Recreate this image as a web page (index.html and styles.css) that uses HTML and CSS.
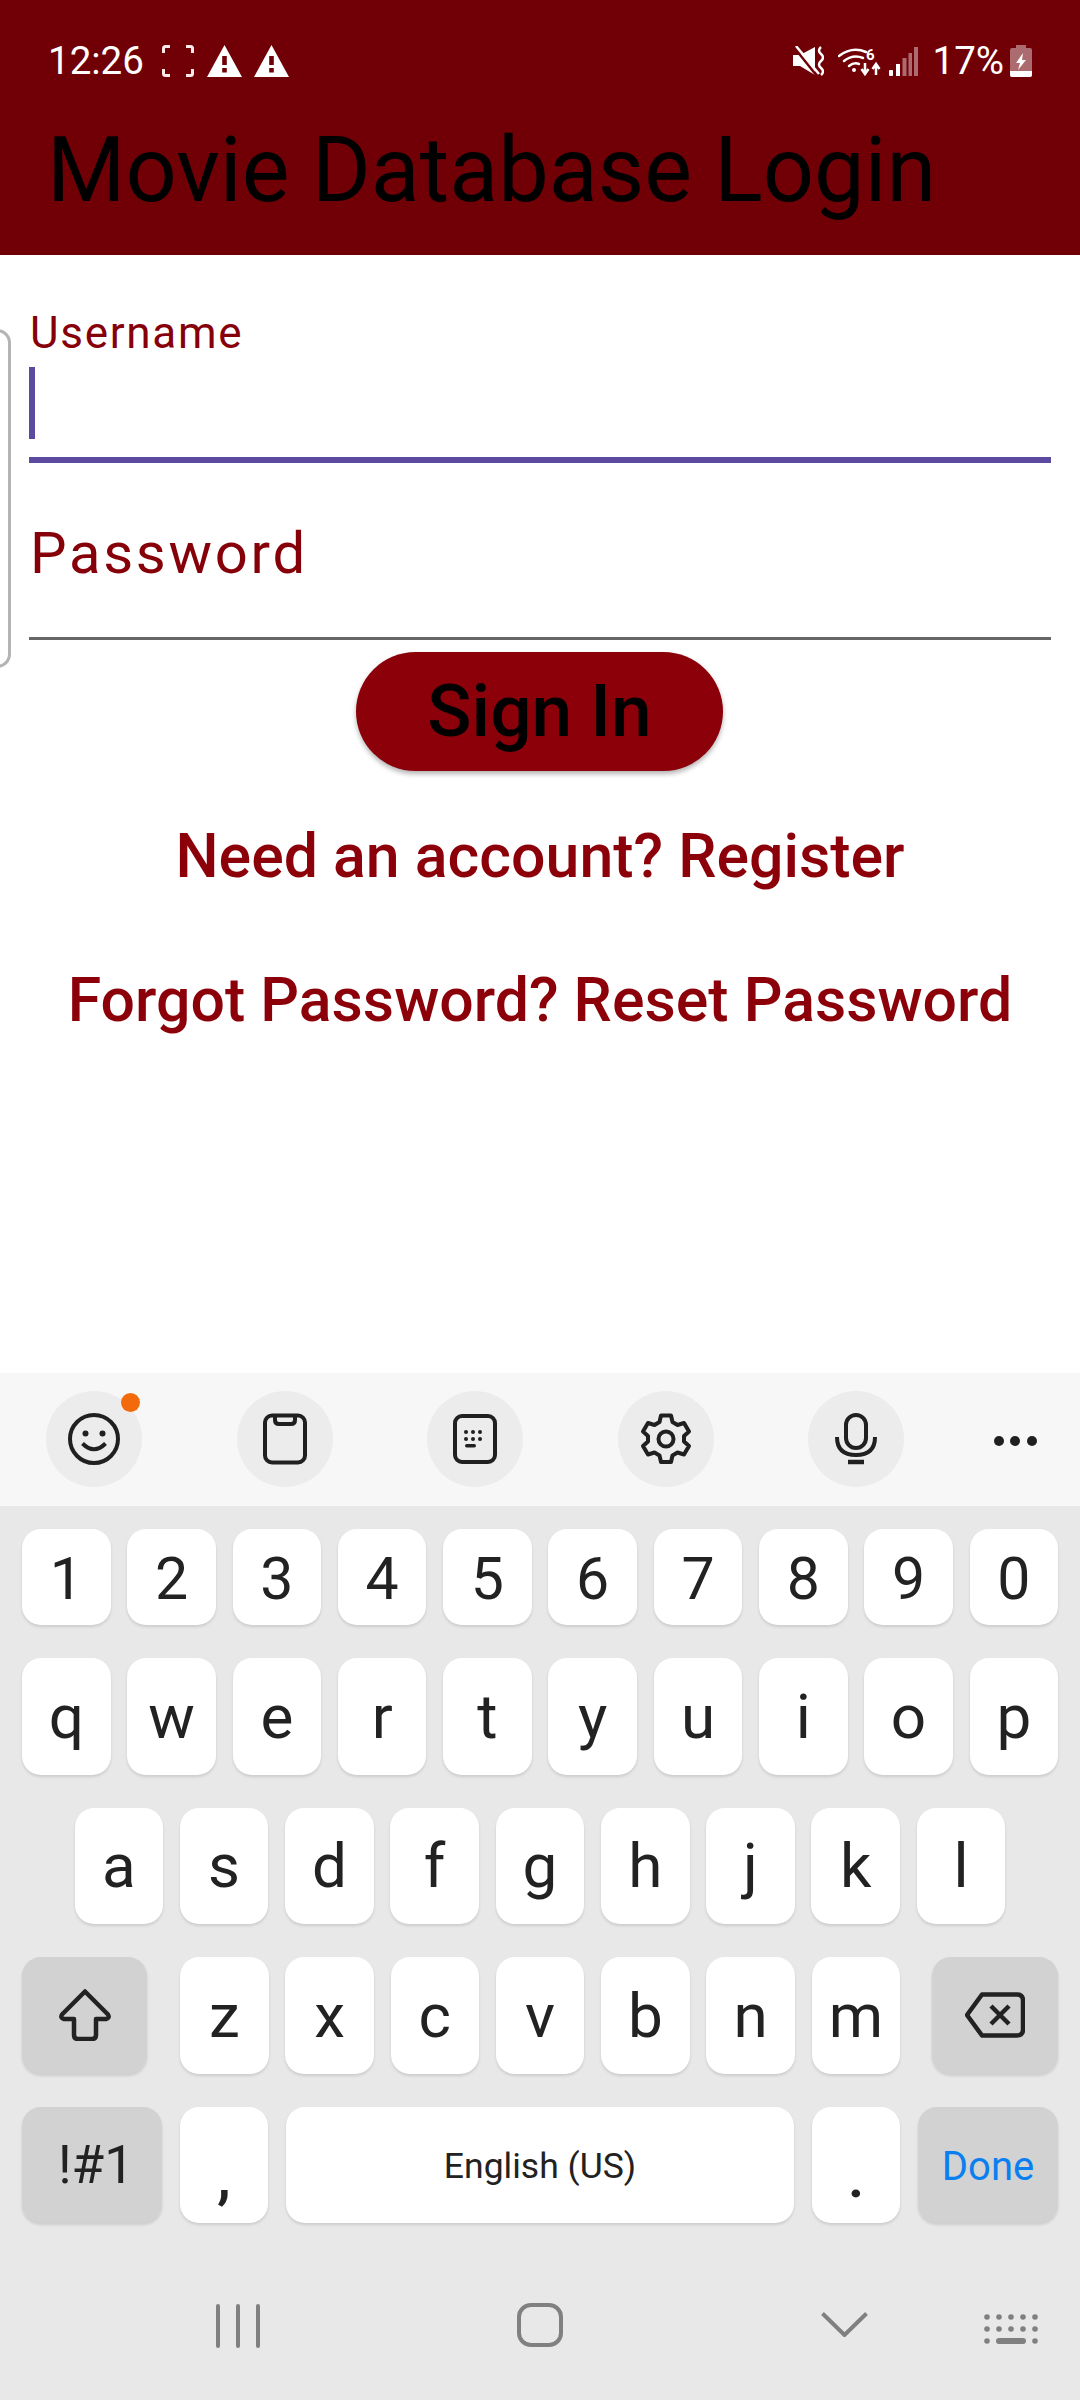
FILE: index.html
```html
<!DOCTYPE html>
<html lang="en">
<head>
<meta charset="utf-8">
<title>Movie Database Login</title>
<link rel="stylesheet" href="styles.css">
</head>
<body>
<div class="page">
  <header class="appbar">
    <div class="status">
      <span class="clock">12:26</span>
      <svg class="ic-bracket" viewBox="0 0 32 32"><path d="M1.500 8V3.500Q1.500 1.500 3.500 1.500H8M24 1.500H28.500Q30.500 1.500 30.500 3.500V8M30.500 24V28.500Q30.500 30.500 28.500 30.500H24M8 30.500H3.500Q1.500 30.500 1.500 28.500V24"/></svg>
      <svg class="ic-warn" viewBox="0 0 35 32"><path fill-rule="evenodd" d="M17.500 0 35 32H0ZM15.200 11h4.600v9h-4.600ZM15.200 23h4.600v4.500h-4.600Z"/></svg>
      <svg class="ic-warn" viewBox="0 0 35 32"><path fill-rule="evenodd" d="M17.500 0 35 32H0ZM15.200 11h4.600v9h-4.600ZM15.200 23h4.600v4.500h-4.600Z"/></svg>
      <span class="status-gap"></span>
      <svg class="ic-mute" viewBox="0 0 31 30"><path d="M0 9h7L22 1v28L7 20H0Z" fill="#fff"/><path d="M0 0 24 30" stroke="#700006" stroke-width="2.500"/><path d="M3 0 26 28" stroke="#fff" stroke-width="2.500"/><path d="M28 1q-4 3.500 0 7t0 7 0 7 0 7" fill="none" stroke="#fff" stroke-width="2.500"/></svg>
      <svg class="ic-wifi" viewBox="0 0 44 32"><g fill="none" stroke="#fff" stroke-width="2.500" stroke-linecap="round"><path d="M1 11Q14 1 28 7"/><path d="M6 16Q15 9 25 13"/><path d="M11 21Q16 17 21 19"/></g><circle cx="16" cy="25" r="2" fill="#fff"/><text class="wifi-six" x="28" y="15">6</text><path d="M27 18v10M23.500 24l3.500 5 3.500-5M38 30V20M34.500 24l3.500-5 3.500 5" fill="none" stroke="#fff" stroke-width="2.500"/></svg>
      <svg class="ic-signal" viewBox="0 0 29 29"><g fill="#fff"><rect x="0" y="23" width="4" height="6" rx="1"/><rect x="7" y="17" width="4" height="12"/></g><g fill="#fff" opacity=".42"><rect x="13.500" y="11" width="4" height="18"/><rect x="19.500" y="6" width="3.500" height="23"/><rect x="25" y="0" width="4" height="29"/></g></svg>
      <span class="pct">17%</span>
      <svg class="ic-batt" viewBox="0 0 22 32"><path d="M6 0h10v3h4q2 0 2 2v25q0 2-2 2H2q-2 0-2-2V5q0-2 2-2h4Z" fill="#fff" opacity=".42"/><path d="M0 26h22v4q0 2-2 2H2q-2 0-2-2Z" fill="#fff"/><path d="M13 8 6 18h4l-2 7 8-10h-4Z" fill="#fff"/></svg>
    </div>
    <h1 class="title">Movie Database Login</h1>
  </header>

  <main class="form">
    <div class="side-box"></div>
    <div class="field">
      <label class="label-small">Username</label>
      <div class="caret"></div>
      <div class="line-active"></div>
      <label class="label-large">Password</label>
      <div class="line-idle"></div>
    </div>
    <button class="signin">Sign In</button>
    <a class="link link-first">Need an account? Register</a>
    <a class="link link-second">Forgot Password? Reset Password</a>
  </main>

  <section class="keyboard">
    <div class="toolbar">
      <div class="tool tool-first">
        <svg class="tool-ic" viewBox="0 0 52 52"><circle cx="26" cy="26" r="24" /><circle class="solid" cx="17.500" cy="20.500" r="3"/><circle class="solid" cx="34.500" cy="20.500" r="3"/><path d="M14.500 30.500Q26 42 37.500 30.500"/></svg>
        <span class="badge"></span>
      </div>
      <div class="tool">
        <svg class="tool-ic" viewBox="0 0 52 52"><rect x="6" y="2.500" width="40" height="47" rx="7"/><path d="M16 3v4q0 4 4 4h12q4 0 4-4V3"/></svg>
      </div>
      <div class="tool">
        <svg class="tool-ic" viewBox="0 0 52 52"><rect x="6" y="3" width="40" height="46" rx="7"/><g class="solid"><circle cx="17" cy="19" r="2"/><circle cx="24" cy="19" r="2"/><circle cx="31" cy="19" r="2"/><circle cx="38" cy="19" r="0"/><circle cx="17" cy="26" r="2"/><circle cx="24" cy="26" r="2"/><circle cx="31" cy="26" r="2"/><rect x="16" y="31" width="11" height="3.500" rx="1.700"/></g></svg>
      </div>
      <div class="tool">
        <svg class="tool-ic" viewBox="0 0 52 52"><path d="M21 2.500h10l1.500 6.500 5 3 6.500-2 5 8.500-5 4.500v5.500l5 4.500-5 8.500-6.500-2-5 3-1.500 6.500H21l-1.500-6.500-5-3-6.500 2-5-8.500 5-4.500V23l-5-4.500 5-8.500 6.500 2 5-3Z" stroke-linejoin="round"/><circle cx="26" cy="26" r="7.500"/></svg>
      </div>
      <div class="tool">
        <svg class="tool-ic" viewBox="0 0 52 52"><rect x="16" y="2" width="20" height="33" rx="10"/><path d="M7 24q0 18 19 18t19-18"/><path class="bar" d="M18 49h16"/></svg>
      </div>
      <div class="more"><i></i><i></i><i></i></div>
    </div>

    <div class="keys">
      <div class="row row-num">
        <div class="key">1</div><div class="key">2</div><div class="key">3</div><div class="key">4</div><div class="key">5</div><div class="key">6</div><div class="key">7</div><div class="key">8</div><div class="key">9</div><div class="key">0</div>
      </div>
      <div class="row">
        <div class="key">q</div><div class="key">w</div><div class="key">e</div><div class="key">r</div><div class="key">t</div><div class="key">y</div><div class="key">u</div><div class="key">i</div><div class="key">o</div><div class="key">p</div>
      </div>
      <div class="row row-center">
        <div class="key">a</div><div class="key">s</div><div class="key">d</div><div class="key">f</div><div class="key">g</div><div class="key">h</div><div class="key">j</div><div class="key">k</div><div class="key">l</div>
      </div>
      <div class="row row-shift">
        <div class="key fn shift">
          <svg class="key-ic" viewBox="0 0 52 52"><path d="M26 2.500 3 25.500q-2 3.500 2 4.500h10v16q0 4 4 4h14q4 0 4-4V30h10q4-1 2-4.500Z" stroke-linejoin="round"/></svg>
        </div>
        <div class="key">z</div><div class="key">x</div><div class="key">c</div><div class="key">v</div><div class="key">b</div><div class="key">n</div><div class="key">m</div>
        <div class="key fn back">
          <svg class="key-ic back-ic" viewBox="0 0 60 46"><path d="M17 2.500h35q6 0 6 6v29q0 6-6 6H17L2 23Z" stroke-linejoin="round"/><path d="M26 14l18 18M44 14 26 32"/></svg>
        </div>
      </div>
      <div class="row row-bottom">
        <div class="key fn sym">!#1</div>
        <div class="key punct">,</div>
        <div class="key space">English (US)</div>
        <div class="key punct">.</div>
        <div class="key fn done">Done</div>
      </div>
    </div>

    <nav class="navbar">
      <div class="nav-recent"><i></i><i></i><i></i></div>
      <div class="nav-home"></div>
      <svg class="nav-back" viewBox="0 0 47 25"><path d="M1.500 1.500 23.500 23 45.500 1.500"/></svg>
      <svg class="nav-kbd" viewBox="0 0 54 30"><g><circle cx="3" cy="3" r="2.800"/><circle cx="15" cy="3" r="2.800"/><circle cx="27" cy="3" r="2.800"/><circle cx="39" cy="3" r="2.800"/><circle cx="51" cy="3" r="2.800"/><circle cx="3" cy="15" r="2.800"/><circle cx="15" cy="15" r="2.800"/><circle cx="27" cy="15" r="2.800"/><circle cx="39" cy="15" r="2.800"/><circle cx="51" cy="15" r="2.800"/><circle cx="3" cy="27" r="2.800"/><circle cx="51" cy="27" r="2.800"/><rect x="12" y="24" width="30" height="6" rx="3"/></g></svg>
    </nav>
  </section>
</div>
</body>
</html>
```
FILE: styles.css
```css
* { box-sizing: border-box; }
html, body { margin: 0; padding: 0; }
body { background: #fff; font-family: Roboto, "Liberation Sans", sans-serif; }
.page { width: 1080px; height: 2400px; display: flex; flex-direction: column; overflow: hidden; }

.appbar { height: 255px; background: #700006; padding-top: 40px; }
.status { height: 42px; display: flex; align-items: center; padding: 0 48px 0 48px; color: #fff; }
.clock { font-size: 38.500px; line-height: 42px; width: 114px; }
.ic-bracket { width: 32px; height: 32px; fill: none; stroke: #fbeaea; stroke-width: 3; margin-right: 13px; }
.ic-warn { width: 35px; height: 32px; fill: #fff; margin-right: 12px; }
.status-gap { flex: 1; }
.ic-mute { width: 31px; height: 30px; margin-right: 14px; }
.ic-wifi { width: 44px; height: 32px; margin-right: 7px; }
.wifi-six { font-size: 15px; font-weight: 700; fill: #fff; }
.ic-signal { width: 29px; height: 29px; margin-right: 15px; }
.pct { font-size: 38.500px; line-height: 42px; margin-right: 6px; }
.ic-batt { width: 22px; height: 32px; }

.title { margin: 43px 0 0; padding-left: 47px; font-size: 90px; line-height: 92px; font-weight: 400; color: #000; white-space: nowrap; }

.form { flex: 1; position: relative; padding-top: 56px; }
.side-box { position: absolute; left: -20px; top: 74px; width: 31px; height: 339px; border: 3px solid #b4b4b4; border-radius: 14px; }
.field { padding: 0 29px; }
.label-small { display: block; font-size: 44px; line-height: 44px; color: #860009; letter-spacing: 1.700px; padding-left: 1px; }
.caret { width: 6px; height: 72px; margin-top: 12px; background: #5b4a9f; }
.line-active { height: 6px; margin-top: 18px; background: #5b4a9f; }
.label-large { display: block; font-size: 58px; line-height: 60px; color: #860009; letter-spacing: 2.700px; padding-left: 1px; margin-top: 60px; }
.line-idle { height: 3px; margin-top: 54px; background: #666; }
.signin { display: block; width: 367px; height: 119px; margin: 12px 0 0 356px; padding: 0; border: 0; border-radius: 60px; background: #8c000a; color: #000; font: 500 73px/119px Roboto, sans-serif; box-shadow: 0 3px 5px rgba(0,0,0,.3); }
.link { display: block; text-align: center; font-size: 60.800px; line-height: 70px; font-weight: 500; color: #8c000a; white-space: nowrap; }
.link-first { margin-top: 51px; }
.link-second { margin-top: 74px; }

.keyboard { height: 1027px; background: #e8e8e9; display: flex; flex-direction: column; }
.toolbar { height: 133px; background: #f7f7f7; display: flex; align-items: center; padding: 0 0 1px 46px; gap: 94.500px; }
.tool { width: 96px; height: 96px; border-radius: 50%; background: #ececec; display: flex; align-items: center; justify-content: center; position: relative; flex: none; }
.tool-ic { width: 52px; height: 52px; fill: none; stroke: #202020; stroke-width: 4; }
.tool-ic .solid { fill: #202020; stroke: none; }
.tool-ic .bar { stroke-width: 4.500; }
.badge { position: absolute; left: 75px; top: 2px; width: 19px; height: 19px; border-radius: 50%; background: #f26a0c; }
.more { display: flex; gap: 6.500px; margin-left: -5px; margin-top: 3px; flex: none; }
.more i { width: 10px; height: 10px; border-radius: 50%; background: #202020; }

.keys { padding: 23px 22px 0; display: flex; flex-direction: column; gap: 33px; }
.row { display: flex; gap: 16.700px; height: 116.500px; }
.row-num { height: 96px; }
.row-center { padding-left: 52.500px; }
.key { width: 88.600px; flex: none; background: #fff; border-radius: 19px; display: flex; align-items: center; justify-content: center; color: #222; font-size: 62px; box-shadow: 0 2px 3px rgba(0,0,0,.12); }
.row-num .key { font-size: 59px; padding-top: 3px; }
.fn { background: #d2d2d2; }
.shift { width: 125px; margin-right: 16.300px; }
.back { width: 125.500px; margin-left: 15.300px; }
.key-ic { width: 52px; height: 52px; fill: none; stroke: #222; stroke-width: 4.500; }
.back-ic { width: 60px; height: 46px; }
.row-bottom { gap: 18px; }
.sym { width: 140px; font-size: 53px; padding-left: 8px; }
.punct { width: 88px; padding-top: 22px; font-weight: 500; }
.space { width: 508px; font-size: 35.500px; padding-top: 3px; }
.done { width: 140px; font-size: 40px; color: #0a7ff0; padding-top: 3px; }

.navbar { flex: 1; position: relative; display: flex; align-items: center; padding: 0 0 0 216px; margin-top: 0; }
.nav-recent { display: flex; gap: 16px; flex: none; margin-top: 28px; }
.nav-recent i { width: 4px; height: 44px; background: #808080; border-radius: 2px; }
.nav-home { width: 46px; height: 44px; border: 4px solid #808080; border-radius: 14px; margin-left: 257px; margin-top: 26px; flex: none; }
.nav-back { width: 47px; height: 25px; fill: none; stroke: #808080; stroke-width: 4; margin-left: 258px; margin-top: 26px; flex: none; }
.nav-kbd { width: 54px; height: 30px; fill: #808080; margin-left: 116px; margin-top: 34px; flex: none; }
```
